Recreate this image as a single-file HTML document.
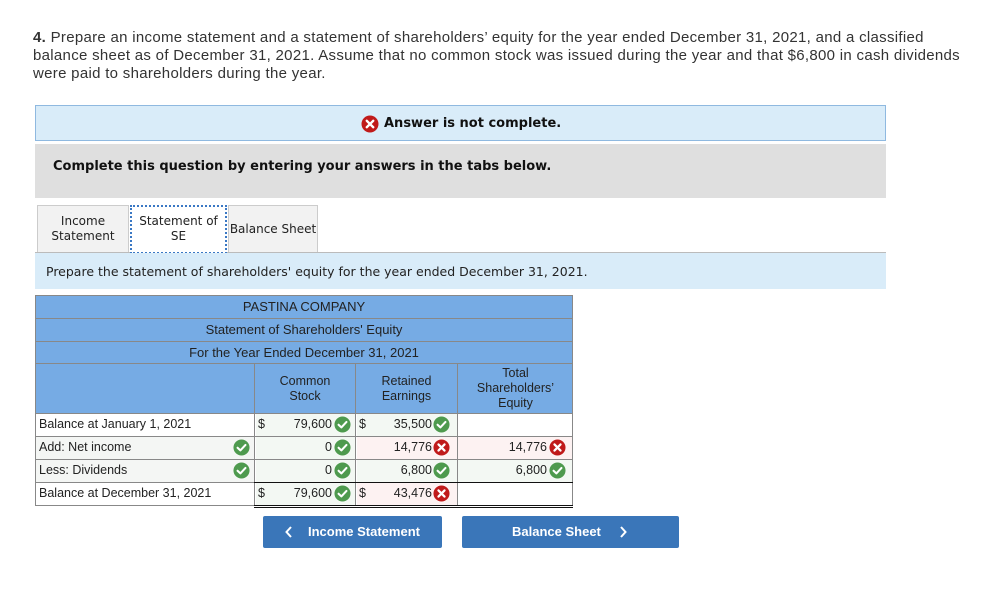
<!DOCTYPE html>
<html><head><meta charset="utf-8"><style>
*{margin:0;padding:0;box-sizing:border-box}
body{width:986px;height:606px;background:#fff;position:relative;overflow:hidden;font-family:"Liberation Sans",Arial,sans-serif;color:#222}
.a{position:absolute}
.intro{left:33px;top:29px;width:940px;font-size:15px;letter-spacing:0.3px;line-height:18px;color:#333}
.v{font-family:"DejaVu Sans",Verdana,sans-serif}
.t{font-size:12.5px;color:#222}
.c{text-align:center}
.ic{position:absolute;width:17px;height:17px}
</style></head><body>
<div class="a intro"><b>4.</b> Prepare an income statement and a statement of shareholders’ equity for the year ended December 31, 2021, and a classified balance sheet as of December 31, 2021. Assume that no common stock was issued during the year and that $6,800 in cash dividends were paid to shareholders during the year.</div>

<div class="a" style="left:35px;top:105px;width:851px;height:36px;background:#d9ecf9;border:1px solid #8fb9e0"></div>
<svg class="a" style="left:361px;top:115px" width="18" height="18" viewBox="0 0 18 18"><circle cx="9" cy="9" r="8.5" fill="#c01a1a"/><path d="M5.8 5.8L12.2 12.2M12.2 5.8L5.8 12.2" stroke="#fff" stroke-width="2.4" stroke-linecap="round"/></svg>
<div class="a v" style="left:384px;top:116px;font-size:13px;font-weight:bold;color:#111">Answer is not complete.</div>

<div class="a" style="left:35px;top:144px;width:851px;height:54px;background:#dfdfdf"></div>
<div class="a v" style="left:53px;top:159px;font-size:13px;font-weight:bold;color:#111">Complete this question by entering your answers in the tabs below.</div>

<div class="a" style="left:35px;top:252px;width:851px;height:1px;background:#bbb"></div>
<div class="a v c" style="left:37px;top:205px;width:92px;height:47px;background:#f2f2f2;border:1px solid #ccc;border-bottom:none;font-size:12px;line-height:15px;padding-top:8px">Income<br>Statement</div>
<div class="a v c" style="left:130px;top:205px;width:97px;height:49px;background:#fff;border:2px dotted #3a78c4;font-size:12px;line-height:15px;padding-top:7px">Statement of<br>SE</div>
<div class="a v c" style="left:228px;top:205px;width:90px;height:47px;background:#f2f2f2;border:1px solid #ccc;border-bottom:none;font-size:12px;line-height:15px;padding-top:16px">Balance Sheet</div>

<div class="a" style="left:35px;top:253px;width:851px;height:36px;background:#d9ecf9"></div>
<div class="a v" style="left:46px;top:264px;font-size:12.5px;color:#222">Prepare the statement of shareholders' equity for the year ended December 31, 2021.</div>

<div class="a" style="left:35px;top:295px;width:538px;height:69px;background:#76abe4;border:1px solid #888"></div>
<div class="a" style="left:35px;top:318px;width:538px;height:1px;background:#888"></div>
<div class="a" style="left:35px;top:341px;width:538px;height:1px;background:#888"></div>
<div class="a t c" style="left:35px;top:299px;width:538px;font-size:13px">PASTINA COMPANY</div>
<div class="a t c" style="left:35px;top:322px;width:538px;font-size:13px">Statement of Shareholders' Equity</div>
<div class="a t c" style="left:35px;top:345px;width:538px;font-size:13px">For the Year Ended December 31, 2021</div>

<div class="a" style="left:35px;top:364px;width:538px;height:50px;background:#76abe4;border:1px solid #888;border-top:none"></div>
<div class="a" style="left:254px;top:364px;width:1px;height:141px;background:#888"></div>
<div class="a" style="left:355px;top:364px;width:1px;height:141px;background:#888"></div>
<div class="a" style="left:457px;top:364px;width:1px;height:141px;background:#888"></div>
<div class="a t c" style="left:255px;top:374px;width:100px;line-height:15px">Common<br>Stock</div>
<div class="a t c" style="left:356px;top:374px;width:101px;line-height:15px">Retained<br>Earnings</div>
<div class="a t c" style="left:458px;top:366px;width:115px;line-height:15px">Total<br>Shareholders’<br>Equity</div>

<div class="a" style="left:35px;top:413px;width:538px;height:93px;border:1px solid #888"></div>
<div class="a" style="left:36px;top:437px;width:218px;height:45px;background:#f4f6f4"></div>
<div class="a" style="left:256px;top:414px;width:99px;height:91px;background:#f3f8f3"></div>
<div class="a" style="left:357px;top:414px;width:100px;height:22px;background:#f3f8f3"></div>
<div class="a" style="left:357px;top:437px;width:100px;height:22px;background:#fdf2f2"></div>
<div class="a" style="left:357px;top:460px;width:100px;height:22px;background:#f3f8f3"></div>
<div class="a" style="left:357px;top:483px;width:100px;height:22px;background:#fdf2f2"></div>
<div class="a" style="left:458px;top:437px;width:114px;height:22px;background:#fdf2f2"></div>
<div class="a" style="left:458px;top:460px;width:114px;height:22px;background:#f3f8f3"></div>
<div class="a" style="left:35px;top:436px;width:538px;height:1px;background:#888"></div>
<div class="a" style="left:35px;top:459px;width:538px;height:1px;background:#888"></div>
<div class="a" style="left:35px;top:482px;width:538px;height:1px;background:#888"></div>
<div class="a" style="left:254px;top:482px;width:319px;height:1px;background:#111"></div>
<div class="a" style="left:254px;top:505px;width:319px;height:3px;border-top:1px solid #111;border-bottom:1px solid #111"></div>

<div class="a t" style="left:39px;top:417px">Balance at January 1, 2021</div>
<div class="a t" style="left:39px;top:440px">Add: Net income</div>
<div class="a t" style="left:39px;top:463px">Less: Dividends</div>
<div class="a t" style="left:39px;top:486px">Balance at December 31, 2021</div>

<div class="a t" style="left:258px;top:417px">$</div>
<div class="a t" style="left:359px;top:417px">$</div>
<div class="a t" style="left:258px;top:486px">$</div>
<div class="a t" style="left:359px;top:486px">$</div>

<div class="a t" style="left:260px;top:417px;width:72px;text-align:right">79,600</div>
<div class="a t" style="left:260px;top:440px;width:72px;text-align:right">0</div>
<div class="a t" style="left:260px;top:463px;width:72px;text-align:right">0</div>
<div class="a t" style="left:260px;top:486px;width:72px;text-align:right">79,600</div>
<div class="a t" style="left:360px;top:417px;width:72px;text-align:right">35,500</div>
<div class="a t" style="left:360px;top:440px;width:72px;text-align:right">14,776</div>
<div class="a t" style="left:360px;top:463px;width:72px;text-align:right">6,800</div>
<div class="a t" style="left:360px;top:486px;width:72px;text-align:right">43,476</div>
<div class="a t" style="left:460px;top:440px;width:87px;text-align:right">14,776</div>
<div class="a t" style="left:460px;top:463px;width:87px;text-align:right">6,800</div>

<svg width="0" height="0" style="position:absolute"><defs>
<symbol id="ok" viewBox="0 0 18 18"><circle cx="9" cy="9" r="8.5" fill="#4e9a4e"/><path d="M4.8 9.3L7.8 12.1L13.2 6.3" stroke="#fff" stroke-width="2.2" fill="none" stroke-linecap="round" stroke-linejoin="round"/></symbol>
<symbol id="no" viewBox="0 0 18 18"><circle cx="9" cy="9" r="8.5" fill="#c01a1a"/><path d="M5.8 5.8L12.2 12.2M12.2 5.8L5.8 12.2" stroke="#fff" stroke-width="2.4" stroke-linecap="round"/></symbol>
</defs></svg>
<svg class="ic" style="left:334px;top:416px"><use href="#ok"/></svg>
<svg class="ic" style="left:334px;top:439px"><use href="#ok"/></svg>
<svg class="ic" style="left:334px;top:462px"><use href="#ok"/></svg>
<svg class="ic" style="left:334px;top:485px"><use href="#ok"/></svg>
<svg class="ic" style="left:433px;top:416px"><use href="#ok"/></svg>
<svg class="ic" style="left:433px;top:439px"><use href="#no"/></svg>
<svg class="ic" style="left:433px;top:462px"><use href="#ok"/></svg>
<svg class="ic" style="left:433px;top:485px"><use href="#no"/></svg>
<svg class="ic" style="left:549px;top:439px"><use href="#no"/></svg>
<svg class="ic" style="left:549px;top:462px"><use href="#ok"/></svg>
<svg class="ic" style="left:233px;top:439px"><use href="#ok"/></svg>
<svg class="ic" style="left:233px;top:462px"><use href="#ok"/></svg>

<div class="a" style="left:263px;top:516px;width:179px;height:32px;background:#3a76b9;border-radius:2px"></div>
<div class="a" style="left:462px;top:516px;width:217px;height:32px;background:#3a76b9;border-radius:2px"></div>
<svg class="a" style="left:284px;top:525px" width="10" height="14"><path d="M7 2L2.5 7L7 12" stroke="#fff" stroke-width="2" fill="none"/></svg>
<div class="a" style="left:308px;top:524px;color:#fff;font-size:13px;font-weight:bold">Income Statement</div>
<div class="a" style="left:512px;top:524px;color:#fff;font-size:13px;font-weight:bold">Balance Sheet</div>
<svg class="a" style="left:618px;top:525px" width="10" height="14"><path d="M3 2L7.5 7L3 12" stroke="#fff" stroke-width="2" fill="none"/></svg>
</body></html>
